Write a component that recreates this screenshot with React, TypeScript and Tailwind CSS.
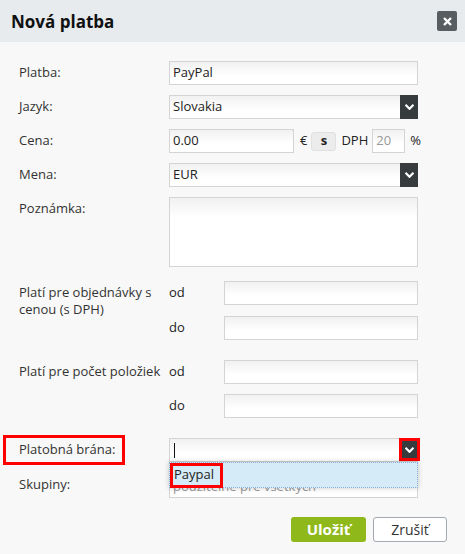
import React from "react";

const inputCls =
  "h-[24px] border border-[#d4d4d4] bg-[linear-gradient(to_bottom,#f1f1f1,#ffffff_14px)] text-[13px] text-[#222] px-[3px] flex items-center";

function Chevron() {
  return (
    <svg width="9" height="6" viewBox="0 0 9 6">
      <path d="M0.5 0.8 L4.5 4.8 L8.5 0.8" stroke="#fff" strokeWidth="2.2" fill="none" />
    </svg>
  );
}

function Select({ value }: { value: string }) {
  return (
    <div className={`${inputCls} w-[249px] pr-0 relative`}>
      <span className="flex-1">{value}</span>
      <div className="absolute right-[-1px] top-[-1px] bottom-[-1px] w-[18px] bg-[#363b3e] flex items-center justify-center">
        <Chevron />
      </div>
    </div>
  );
}

function Row({ label, children, mt = "mt-[10px]" }: { label: string; children: React.ReactNode; mt?: string }) {
  return (
    <div className={`flex items-start ${mt}`}>
      <div className="w-[150px] h-[24px] flex items-center text-[13px] text-[#333]">{label}</div>
      {children}
    </div>
  );
}

export default function App() {
  return (
    <div
      className="w-[465px] h-[554px] bg-[#f8f8f8] overflow-hidden"
      style={{ fontFamily: '"Open Sans", "Noto Sans", sans-serif' }}
    >
      <div className="h-[42px] bg-[#e8ebee] flex items-center justify-between pl-[11px] pr-[8px]">
        <div className="text-[17px] font-bold text-[#111] leading-none">Nová platba</div>
        <div className="w-[20px] h-[20px] rounded-[2px] bg-[#575d61] flex items-center justify-center">
          <svg width="9" height="9" viewBox="0 0 9 9">
            <path d="M1 1 L8 8 M8 1 L1 8" stroke="#fff" strokeWidth="2.4" />
          </svg>
        </div>
      </div>

      <div className="pl-[19px] pt-[19px]">
        <Row label="Platba:" mt="mt-0">
          <div className={`${inputCls} w-[249px]`}>PayPal</div>
        </Row>
        <Row label="Jazyk:">
          <Select value="Slovakia" />
        </Row>
        <Row label="Cena:">
          <div className="flex items-center">
            <div className={`${inputCls} w-[125px]`}>0.00</div>
            <span className="ml-[6px] text-[13px] text-[#222]">€</span>
            <div className="ml-[4px] w-[25px] h-[19px] rounded-[3px] bg-[#ececec] border border-[#e0e0e0] flex items-center justify-center text-[13px] font-bold text-[#222]">
              s
            </div>
            <span className="ml-[5px] text-[13px] text-[#222]">DPH</span>
            <div className={`${inputCls} ml-[4px] w-[33px] text-[#999]`}>20</div>
            <span className="ml-[5px] text-[13px] text-[#222]">%</span>
          </div>
        </Row>
        <Row label="Mena:">
          <Select value="EUR" />
        </Row>
        <Row label="Poznámka:">
          <div className="h-[70px] w-[249px] border border-[#d4d4d4] bg-[linear-gradient(to_bottom,#f1f1f1,#ffffff_20px)]" />
        </Row>

        <div className="flex mt-[14px]">
          <div className="w-[150px] text-[13px] text-[#333] leading-[17px] pt-[3px]">
            Platí pre objednávky s<br />cenou (s DPH)
          </div>
          <div className="flex flex-col gap-[11px]">
            <div className="flex items-center">
              <span className="w-[55px] text-[13px] text-[#222]">od</span>
              <div className={`${inputCls} w-[194px]`} />
            </div>
            <div className="flex items-center">
              <span className="w-[55px] text-[13px] text-[#222]">do</span>
              <div className={`${inputCls} w-[194px]`} />
            </div>
          </div>
        </div>

        <div className="flex mt-[20px]">
          <div className="w-[150px] h-[24px] flex items-center text-[13px] text-[#333]">Platí pre počet položiek</div>
          <div className="flex flex-col gap-[10px]">
            <div className="flex items-center">
              <span className="w-[55px] text-[13px] text-[#222]">od</span>
              <div className={`${inputCls} w-[194px]`} />
            </div>
            <div className="flex items-center">
              <span className="w-[55px] text-[13px] text-[#222]">do</span>
              <div className={`${inputCls} w-[194px]`} />
            </div>
          </div>
        </div>

        <div className="flex items-start mt-[20px]">
          <div className="w-[150px] h-[24px] flex items-center text-[13px] text-[#333] relative">
            Platobná brána:
            <div className="absolute left-[-16px] top-[-3px] w-[122px] h-[30px] border-[3px] border-[#ff0000]" />
          </div>
          <div className="relative">
            <div className={`${inputCls} w-[249px] relative`}>
              <span className="w-px h-[15px] bg-[#111] ml-[1px]" />
              <div className="absolute right-[-3px] top-[-1px] w-[21px] h-[23px] border-[3px] border-[#ff0000] bg-[#363b3e] flex items-center justify-center">
                <Chevron />
              </div>
            </div>
            <div className="absolute left-0 top-[24px] w-[249px] h-[26px] z-10 bg-[#d6ebf8] border border-dotted border-[#8aaee0] shadow-[0_0_5px_rgba(0,0,0,0.22)] flex items-center">
              <div className="h-[25px] w-[53px] border-[3px] border-[#ff0000] flex items-center pl-[1px] text-[13px] text-[#222]">
                Paypal
              </div>
            </div>
          </div>
        </div>

        <div className="flex items-start mt-[10px]">
          <div className="w-[150px] h-[26px] flex items-center text-[13px] text-[#333]">Skupiny:</div>
          <div className={`${inputCls} w-[249px] h-[26px] pt-[4px] text-[#999]`}>použiteľné pre všetkých</div>
        </div>

        <div className="flex justify-end gap-[7px] pr-[18px] mt-[19px]">
          <div className="w-[75px] h-[25px] rounded-[3px] bg-[#8fb81b] text-white font-bold text-[15px] flex items-center justify-center">
            Uložiť
          </div>
          <div className="w-[74px] h-[25px] rounded-[3px] bg-white border border-[#a3a9b0] text-[#333] text-[14px] flex items-center justify-center">
            Zrušiť
          </div>
        </div>
      </div>
    </div>
  );
}
